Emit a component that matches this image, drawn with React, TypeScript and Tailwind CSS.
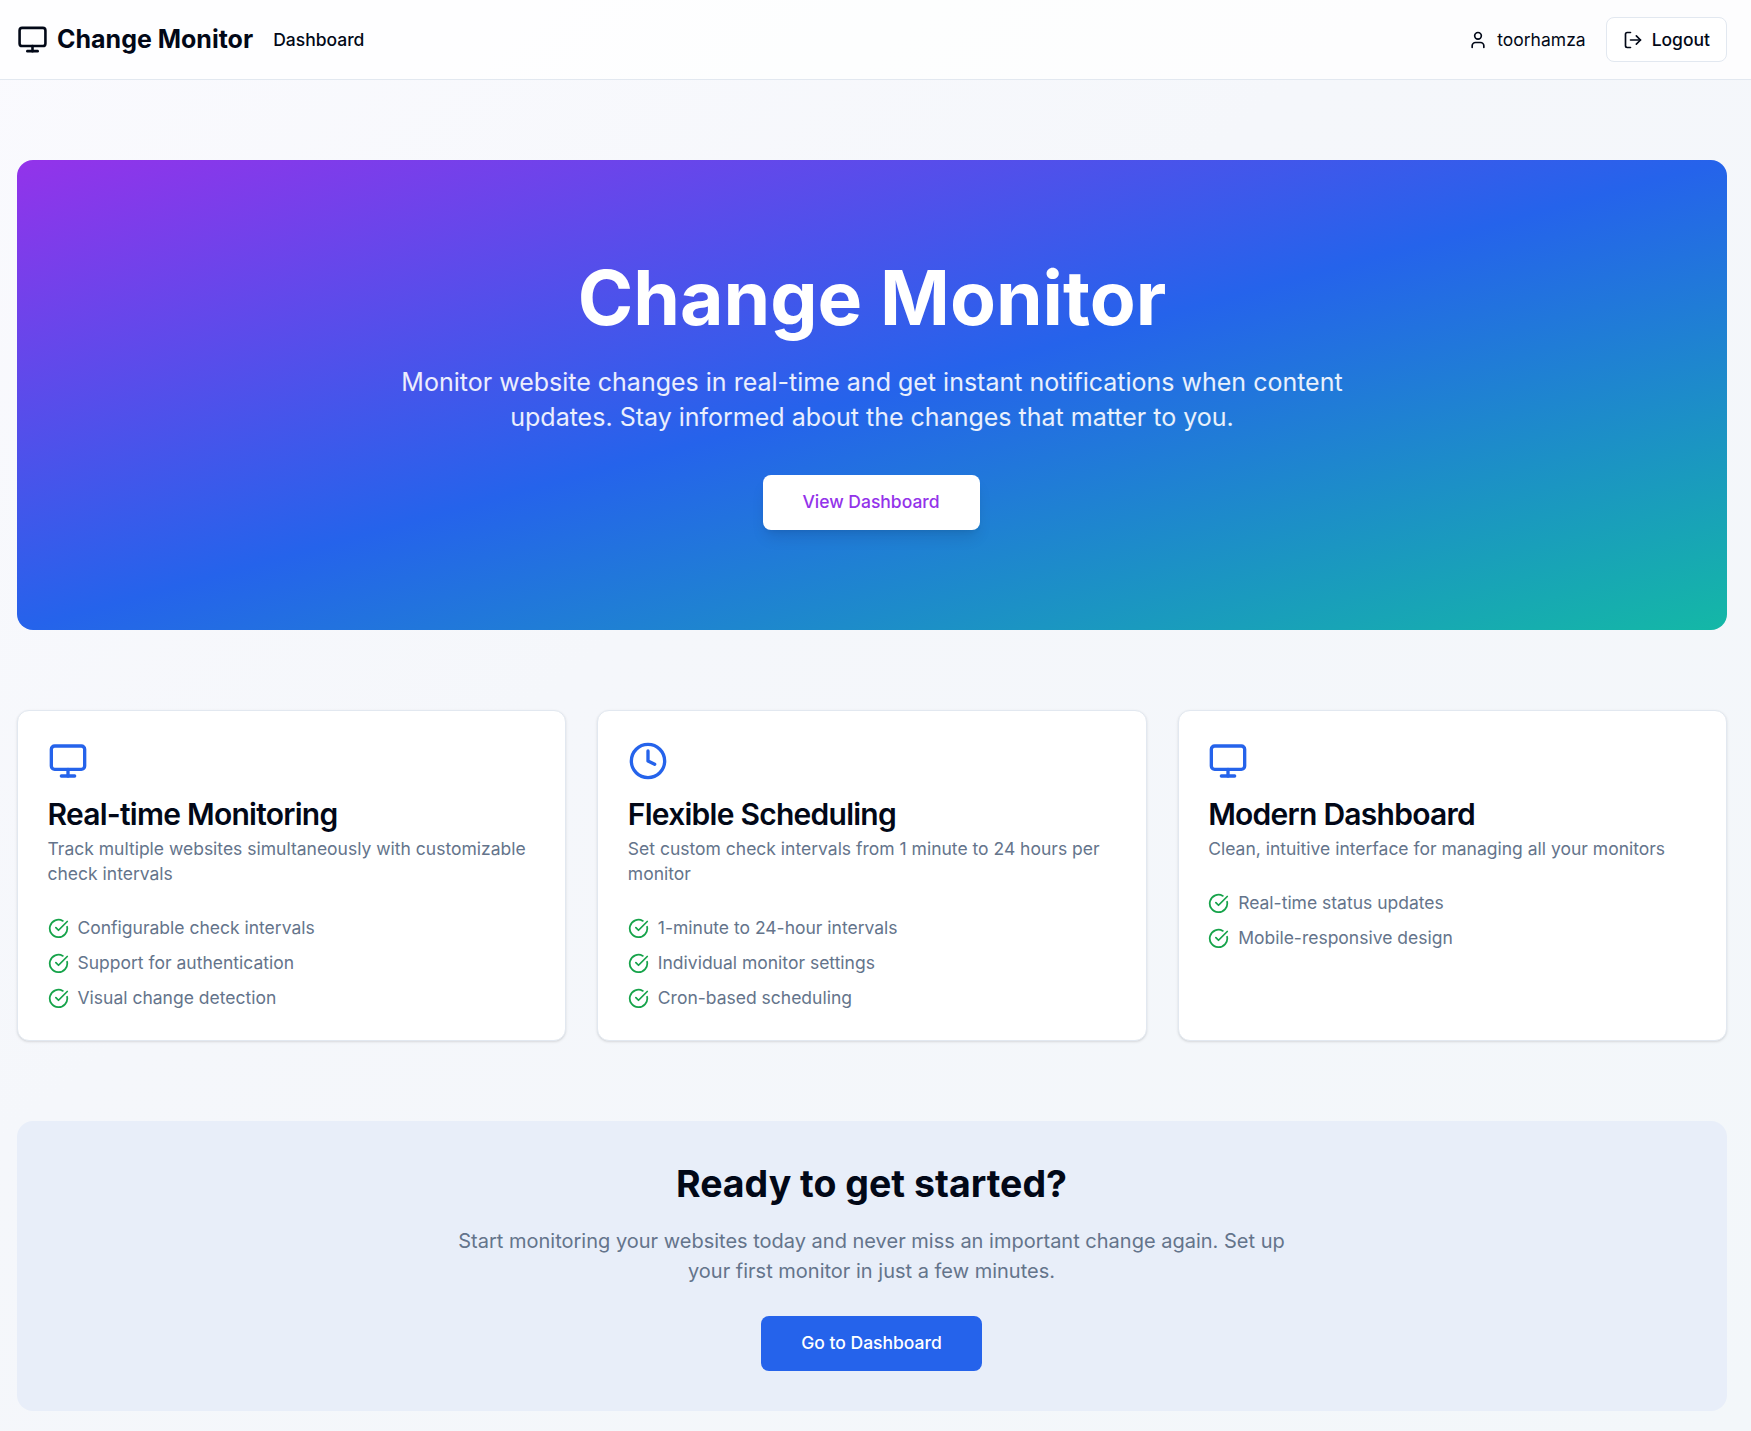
import React from 'react';
import { Monitor, Clock, CircleCheckBig, User, LogOut } from 'lucide-react';

const features = [
  {
    icon: Monitor,
    title: 'Real-time Monitoring',
    description: 'Track multiple websites simultaneously with customizable check intervals',
    items: ['Configurable check intervals', 'Support for authentication', 'Visual change detection'],
  },
  {
    icon: Clock,
    title: 'Flexible Scheduling',
    description: 'Set custom check intervals from 1 minute to 24 hours per monitor',
    items: ['1-minute to 24-hour intervals', 'Individual monitor settings', 'Cron-based scheduling'],
  },
  {
    icon: Monitor,
    title: 'Modern Dashboard',
    description: 'Clean, intuitive interface for managing all your monitors',
    items: ['Real-time status updates', 'Mobile-responsive design'],
  },
];

export default function App() {
  return (
    <div className="min-h-[1431px] bg-linear-to-br/srgb from-[#fafafe] via-[#f5f7fb] via-40% to-[#f3f7fa] font-['Inter',sans-serif] text-[#020817]">
      {/* Top nav */}
      <header className="h-20 border-b border-[#e2e8f0] bg-white/80 pl-[17px] pr-[24px]">
        <div className="flex h-full items-center justify-between">
          <div className="flex items-center gap-[20px]">
            <div className="flex items-center gap-[9px]">
              <Monitor className="h-[31px] w-[31px]" />
              <span className="text-[25px] font-bold">Change Monitor</span>
            </div>
            <span className="text-[17.5px] leading-[28px] font-medium">Dashboard</span>
          </div>
          <div className="flex items-center gap-[20px]">
            <div className="flex items-center gap-[9px] text-[17.5px] leading-[28px]">
              <User className="h-5 w-5" />
              <span>toorhamza</span>
            </div>
            <button className="flex h-[45px] items-center gap-[9px] rounded-lg border border-[#e2e8f0] bg-white px-4 text-[17.5px] leading-[28px] font-medium">
              <LogOut className="h-5 w-5" />
              Logout
            </button>
          </div>
        </div>
      </header>

      <main className="pl-[17px] pr-[24px] pt-20">
        {/* Hero */}
        <section className="flex h-[470px] flex-col items-center rounded-2xl bg-linear-to-br/srgb from-[#9333ea] via-[#2563eb] to-[#14b8a6] pt-[93px] text-center text-white">
          <h1 className="text-[75px] leading-[90px] font-bold">Change Monitor</h1>
          <p className="mt-[22px] max-w-[960px] text-[25px] leading-[35px] text-white/90">
            Monitor website changes in real-time and get instant notifications when content updates. Stay informed about the changes that matter to you.
          </p>
          <button className="mr-[2px] mt-[40px] h-[55px] w-[217px] rounded-lg bg-white text-[17.5px] font-medium text-[#9333ea] shadow-lg">
            View Dashboard
          </button>
        </section>

        {/* Feature cards */}
        <section className="mt-20 grid grid-cols-3 gap-[31px]">
          {features.map((feature) => (
            <div key={feature.title} className="h-[331px] rounded-xl border border-[#e2e8f0] bg-white px-[29.5px] py-[30px] shadow-sm">
              <feature.icon className="h-10 w-10 text-[#2563eb]" />
              <h3 className="mt-[15px] text-[30px] leading-[36px] font-semibold tracking-tight text-[#020817]">{feature.title}</h3>
              <p className="mt-[3.5px] text-[17.5px] leading-[25px] text-[#64748b]">{feature.description}</p>
              <ul className="mt-[30.5px] flex flex-col gap-[11px]">
                {feature.items.map((item) => (
                  <li key={item} className="flex items-center gap-[9px] text-[17.5px] leading-[24px] text-[#64748b]">
                    <CircleCheckBig className="h-[21px] w-[21px] text-[#16a34a]" />
                    {item}
                  </li>
                ))}
              </ul>
            </div>
          ))}
        </section>

        {/* CTA */}
        <section className="mt-20 flex h-[290px] flex-col items-center rounded-2xl bg-[#e8eef9] pr-[1px] pt-[39px] text-center">
          <h2 className="text-[37.5px] leading-[48px] font-bold">Ready to get started?</h2>
          <p className="mt-[18px] max-w-[840px] text-xl leading-[30px] text-[#64748b]">
            Start monitoring your websites today and never miss an important change again. Set up your first monitor in just a few minutes.
          </p>
          <button className="mt-[30px] h-[55px] w-[221px] rounded-lg bg-[#2563eb] text-[17.5px] font-medium text-white">
            Go to Dashboard
          </button>
        </section>
      </main>
    </div>
  );
}
